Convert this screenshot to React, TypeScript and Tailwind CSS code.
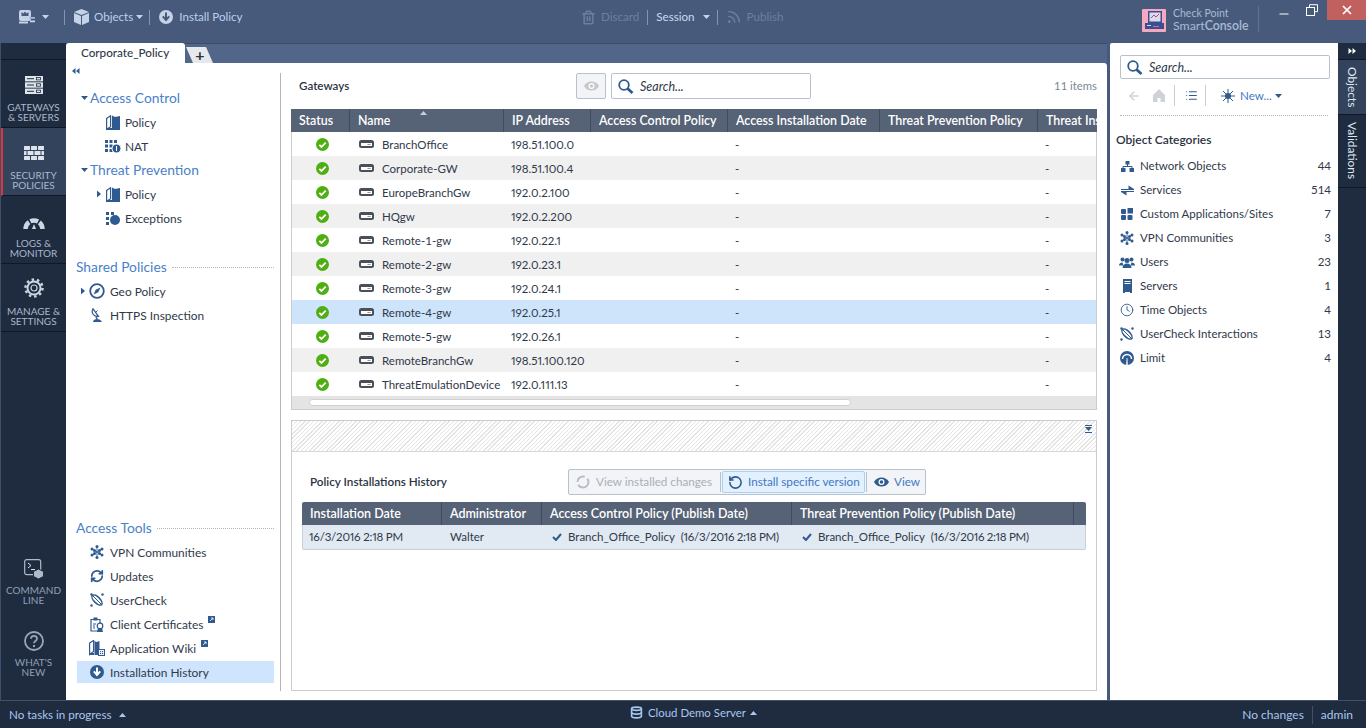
import { ArrowLeft, Clock, Database, List, Minus, RefreshCw, RotateCcw, Rss, Trash2, X } from 'lucide-react'
import type { ReactNode } from 'react'

const BLUE = '#2f5a8f'

const GATEWAYS = [
  ['BranchOffice', '198.51.100.0'],
  ['Corporate-GW', '198.51.100.4'],
  ['EuropeBranchGw', '192.0.2.100'],
  ['HQgw', '192.0.2.200'],
  ['Remote-1-gw', '192.0.22.1'],
  ['Remote-2-gw', '192.0.23.1'],
  ['Remote-3-gw', '192.0.24.1'],
  ['Remote-4-gw', '192.0.25.1'],
  ['Remote-5-gw', '192.0.26.1'],
  ['RemoteBranchGw', '198.51.100.120'],
  ['ThreatEmulationDevice', '192.0.111.13'],
]

function Caret({ className = '' }: { className?: string }) {
  return (
    <svg width="7" height="4" viewBox="0 0 7 4" className={`shrink-0 ${className}`}>
      <path d="M0 0h7L3.500 4z" fill="currentColor" />
    </svg>
  )
}

function CaretUp({ className = '' }: { className?: string }) {
  return (
    <svg width="7" height="4" viewBox="0 0 7 4" className={`shrink-0 ${className}`}>
      <path d="M0 4h7L3.500 0z" fill="currentColor" />
    </svg>
  )
}

function CaretRight() {
  return (
    <svg width="4" height="7" viewBox="0 0 4 7" className="block text-[#2f5a8f]">
      <path d="M0 0v7l4-3.500z" fill="currentColor" />
    </svg>
  )
}

function DoubleTriangle({ className = '' }: { className?: string }) {
  return (
    <svg width="8" height="6" viewBox="0 0 8 6" className={`shrink-0 ${className}`}>
      <path d="M3.500 0v6L0 3zM7.500 0v6L4 3z" fill="currentColor" />
    </svg>
  )
}

function SearchIcon() {
  return (
    <svg width="16" height="15" viewBox="0 0 16 15" className="shrink-0">
      <circle cx="6" cy="6" r="4.800" fill="none" stroke={BLUE} strokeWidth="1.800" />
      <path d="M9.500 9.500l5 4.500" stroke={BLUE} strokeWidth="2.800" />
    </svg>
  )
}

function EyeIcon({ color }: { color: string }) {
  return (
    <svg width="15" height="10" viewBox="0 0 15 10" className="shrink-0">
      <path d="M0 5C3-1 12-1 15 5 12 11 3 11 0 5z" fill={color} />
      <circle cx="7.500" cy="5" r="3" fill="#fff" />
      <circle cx="7.500" cy="5" r="1.800" fill={color} />
    </svg>
  )
}

function StatusOk() {
  return (
    <svg width="13" height="13" viewBox="0 0 13 13">
      <circle cx="6.500" cy="6.500" r="6.500" fill="#4fae12" />
      <path d="M3.300 6.800l2.200 2.200 4.200-4.300" stroke="#fff" strokeWidth="1.800" fill="none" />
    </svg>
  )
}

function GatewayIcon() {
  return (
    <svg width="15" height="8" viewBox="0 0 15 8" className="shrink-0">
      <rect x="0" y="0" width="15" height="8" rx="2.500" fill="#4a4f58" />
      <rect x="2" y="3" width="11" height="3" fill="#fff" />
      <path d="M8.500 5l1-1 1 1 1-1" stroke="#4a4f58" strokeWidth="0.700" fill="none" />
    </svg>
  )
}

function BookIcon() {
  return (
    <svg width="14" height="15" viewBox="0 0 14 15" className="shrink-0">
      <path d="M0.600 3.500l4-2.800v11l-4 2.500z" fill="none" stroke={BLUE} strokeWidth="1.200" />
      <path d="M0 13h6v2H0z" fill={BLUE} />
      <path d="M6 0.500l3 1.500 5-1V15H6z" fill={BLUE} />
    </svg>
  )
}

function NatIcon() {
  return (
    <svg width="16" height="13" viewBox="0 0 16 13" className="shrink-0">
      {[0, 4.500, 9].map((y) =>
        [0, 4.500, 9].map((x) => <rect key={`${x}-${y}`} x={x} y={y} width="3" height="3" fill={BLUE} />)
      )}
      <circle cx="11.500" cy="8.500" r="4.500" fill={BLUE} stroke="#fff" />
      <path d="M11.500 6v5" stroke="#fff" />
    </svg>
  )
}

function ExceptionsIcon() {
  return (
    <svg width="14" height="13" viewBox="0 0 14 13" className="shrink-0">
      <rect x="0" y="0" width="3" height="3" fill={BLUE} />
      <rect x="5" y="0" width="3" height="3" fill={BLUE} />
      <rect x="0" y="5" width="3" height="3" fill={BLUE} />
      <rect x="0" y="10" width="3" height="3" fill={BLUE} />
      <circle cx="9" cy="8" r="5" fill={BLUE} />
    </svg>
  )
}

function GeoIcon() {
  return (
    <svg width="16" height="16" viewBox="0 0 16 16" className="shrink-0">
      <circle cx="8" cy="8" r="6.800" fill="none" stroke={BLUE} strokeWidth="1.800" />
      <path d="M11.500 4.500L9.300 9.300 4.500 11.500l2.200-4.800z" fill={BLUE} />
    </svg>
  )
}

function HttpsIcon() {
  return (
    <svg width="12" height="14" viewBox="0 0 12 14" className="shrink-0">
      <path d="M2 0.800C0 4 2 9 7.500 8.300z" fill="#fff" stroke={BLUE} strokeWidth="1.200" />
      <path d="M4.500 4.500l2-2" stroke={BLUE} />
      <path d="M5 8.500l1 2.500" stroke={BLUE} strokeWidth="1.500" />
      <path d="M2 14c0-2 2-3 4-3s4 1 5 3z" fill={BLUE} />
    </svg>
  )
}

function VpnIcon() {
  return (
    <svg width="14" height="14" viewBox="0 0 14 14" className="shrink-0">
      <path d="M7 1.500v11M2 4l10 6M12 4L2 10" stroke={BLUE} strokeWidth="0.900" />
      {[
        [7, 1.500], [7, 12.500], [2, 4], [12, 4], [2, 10], [12, 10], [4.500, 5.500], [9.500, 5.500], [4.500, 8.500], [9.500, 8.500],
      ].map(([x, y]) => (
        <circle key={`${x}-${y}`} cx={x} cy={y} r="1.500" fill={BLUE} />
      ))}
    </svg>
  )
}

function UserCheckIcon() {
  return (
    <svg width="14" height="14" viewBox="0 0 14 14" className="shrink-0">
      <ellipse cx="7" cy="7" rx="6.500" ry="3" transform="rotate(45 7 7)" fill="none" stroke={BLUE} strokeWidth="1.500" />
      <path d="M3 3l8 8" stroke={BLUE} strokeWidth="1" />
      <circle cx="1.500" cy="1.500" r="1.200" fill={BLUE} />
      <circle cx="12.500" cy="1.500" r="1.200" fill={BLUE} />
      <circle cx="1.500" cy="12.500" r="1.200" fill={BLUE} />
    </svg>
  )
}

function CertIcon() {
  return (
    <svg width="15" height="15" viewBox="0 0 15 15" className="shrink-0">
      <path d="M1 2.500h9V14H1z" fill="none" stroke={BLUE} strokeWidth="1.200" />
      <rect x="3.500" y="0.500" width="4" height="3" fill={BLUE} />
      <circle cx="10" cy="9" r="2.800" fill="#fff" stroke={BLUE} strokeWidth="1.200" />
      <path d="M8 11l-1 4h6l-1-4z" fill={BLUE} />
      <path d="M3 7h3M3 9h2M3 11h2" stroke={BLUE} />
    </svg>
  )
}

function WikiIcon() {
  return (
    <svg width="16" height="16" viewBox="0 0 16 16" className="shrink-0">
      <path d="M0.600 3l4-2.500v11l-4 3z" fill="none" stroke={BLUE} strokeWidth="1.200" />
      <path d="M0 13h5v2H0zM5.500 1l2 1 3-1v8H9v6H5.500z" fill={BLUE} />
      <rect x="9.500" y="9.500" width="6" height="6" fill="#fff" stroke={BLUE} />
      <rect x="11" y="11" width="1.200" height="1.200" fill={BLUE} />
      <rect x="13" y="11" width="1.200" height="1.200" fill={BLUE} />
      <rect x="11" y="13" width="1.200" height="1.200" fill={BLUE} />
      <rect x="13" y="13" width="1.200" height="1.200" fill={BLUE} />
    </svg>
  )
}

function DownloadCircle({ color = BLUE, arrow = '#fff' }: { color?: string; arrow?: string }) {
  return (
    <svg width="14" height="14" viewBox="0 0 14 14" className="shrink-0">
      <circle cx="7" cy="7" r="7" fill={color} />
      <path d="M7 2.500v7M3.800 6.300L7 10l3.200-3.700" stroke={arrow} strokeWidth="2" fill="none" />
    </svg>
  )
}

function ExternalBadge() {
  return (
    <svg width="7" height="7" viewBox="0 0 7 7" className="mb-[10px] ml-[5px] shrink-0">
      <rect width="7" height="7" fill={BLUE} />
      <path d="M2 5l3-3M3 2h2v2" stroke="#fff" strokeWidth="0.800" fill="none" />
    </svg>
  )
}

function NetworkIcon() {
  return (
    <svg width="13" height="11" viewBox="0 0 13 11" className="shrink-0">
      <rect x="4.500" y="0" width="4" height="3.500" fill={BLUE} />
      <path d="M6.500 3v2.500M2 8V5.500h9V8" stroke={BLUE} fill="none" />
      <rect x="0" y="7" width="4.500" height="4" fill={BLUE} />
      <rect x="8.500" y="7" width="4.500" height="4" fill={BLUE} />
    </svg>
  )
}

function ServicesIcon() {
  return (
    <svg width="13" height="11" viewBox="0 0 13 11" className="shrink-0">
      <path d="M0 4h7.500V0.500L13 4v1H0zM0 6h13v1H5.500v3.500L0 7z" fill={BLUE} />
    </svg>
  )
}

function AppsIcon() {
  return (
    <svg width="12" height="12" viewBox="0 0 12 12" className="shrink-0">
      <rect x="0" y="1" width="5" height="5" rx="1" fill={BLUE} />
      <rect x="6.500" y="0" width="5.500" height="5.500" fill={BLUE} />
      <rect x="0" y="7" width="5" height="5" rx="1" fill={BLUE} />
      <rect x="6.500" y="7" width="5" height="5" rx="1" fill={BLUE} />
    </svg>
  )
}

function UsersIcon() {
  return (
    <svg width="16" height="11" viewBox="0 0 16 11" className="shrink-0">
      <circle cx="3.500" cy="2.500" r="2" fill={BLUE} />
      <circle cx="12.500" cy="2.500" r="2" fill={BLUE} />
      <path d="M0 8.500c0-2 1.500-3 3.500-3l1 3zM16 8.500c0-2-1.500-3-3.500-3l-1 3z" fill={BLUE} />
      <circle cx="8" cy="3.500" r="2.500" fill={BLUE} />
      <path d="M3.500 11c0-3 2-4.500 4.500-4.500s4.500 1.500 4.500 4.500z" fill={BLUE} />
    </svg>
  )
}

function ServerIcon() {
  return (
    <svg width="9" height="14" viewBox="0 0 9 14" className="shrink-0">
      <rect width="9" height="13" fill={BLUE} />
      <rect x="1.500" y="2" width="6" height="1" fill="#fff" />
      <rect x="1.500" y="4" width="6" height="1" fill="#fff" />
      <rect x="0" y="13" width="2" height="1" fill={BLUE} />
      <rect x="7" y="13" width="2" height="1" fill={BLUE} />
    </svg>
  )
}

function LimitIcon() {
  return (
    <svg width="14" height="14" viewBox="0 0 14 14" className="shrink-0">
      <circle cx="7" cy="7" r="7" fill={BLUE} />
      <path d="M2.500 8a4.500 4.500 0 0 1 9 0" stroke="#fff" strokeWidth="1.500" fill="none" />
      <path d="M6.200 14l.4-7h.8l.4 7z" fill="#fff" />
    </svg>
  )
}

function ServersNavIcon() {
  return (
    <svg width="18" height="18" viewBox="0 0 18 18">
      {[0, 6.300, 12.600].map((y) => (
        <g key={y}>
          <rect x="0" y={y} width="18" height="5.400" fill="#dfe4ec" />
          <rect x="2" y={y + 2.200} width="7" height="1" fill="#1f2b3e" />
          <rect x="11.500" y={y + 1.500} width="4" height="2.400" fill="none" stroke="#1f2b3e" strokeWidth="0.800" />
        </g>
      ))}
    </svg>
  )
}

function FirewallIcon() {
  return (
    <svg width="20" height="14" viewBox="0 0 20 14">
      {[0, 10].map((y) =>
        [0, 7, 14].map((x) => <rect key={`${x}-${y}`} x={x} y={y} width="6" height="4" rx="0.500" fill="#dfe4ec" />)
      )}
      {[0, 3.500, 10.500, 17.500].map((x, i) => (
        <rect key={x} x={x} y="5" width={i === 0 ? 2.500 : i === 3 ? 2.500 : 6} height="4" rx="0.500" fill="#dfe4ec" />
      ))}
    </svg>
  )
}

function GaugeIcon() {
  return (
    <svg width="22" height="13" viewBox="0 0 22 13">
      <path d="M2.500 13A8.500 8.500 0 0 1 19.500 13" stroke="#cdd6e3" strokeWidth="4.500" fill="none" strokeDasharray="8 1.500" />
      <path d="M11 8l-2 5h4z" fill="#cdd6e3" />
    </svg>
  )
}

function GearIcon() {
  return (
    <svg width="20" height="20" viewBox="0 0 20 20">
      <circle cx="10" cy="10" r="6.500" fill="none" stroke="#cdd6e3" strokeWidth="2" />
      <circle cx="10" cy="10" r="3" fill="none" stroke="#cdd6e3" strokeWidth="1.200" />
      <circle cx="10" cy="10" r="8.500" fill="none" stroke="#cdd6e3" strokeWidth="2.500" strokeDasharray="2.500 2.840" />
    </svg>
  )
}

function CommandIcon() {
  return (
    <svg width="20" height="20" viewBox="0 0 20 20">
      <rect x="0.700" y="0.700" width="16" height="15" rx="2" fill="none" stroke="#aeb9c9" strokeWidth="1.200" />
      <path d="M4 4l3 2.500L4 9M7 10.500h4" stroke="#dfe4ec" fill="none" />
      <path d="M14.500 10l5 2.500v5L14.500 20l-5-2.500v-5z" fill="#aeb9c9" stroke="#1f2b3e" />
    </svg>
  )
}

function HelpIcon() {
  return (
    <svg width="20" height="20" viewBox="0 0 20 20">
      <circle cx="10" cy="10" r="9" fill="none" stroke="#9aa6b8" strokeWidth="1.800" />
      <path d="M7 7.800c0-4 6-4 6 0 0 2.200-3 2.200-3 4.400" stroke="#9aa6b8" strokeWidth="1.800" fill="none" />
      <rect x="9" y="14" width="2" height="2" fill="#9aa6b8" />
    </svg>
  )
}

function CubeIcon() {
  return (
    <svg width="15" height="16" viewBox="0 0 15 16" className="shrink-0">
      <path d="M7.500 0L15 3 7.500 6 0 3z" fill="#c4d3e8" />
      <path d="M0 4l7 3v9l-7-3zM8 7l7-3v9l-7 3z" fill="#c4d3e8" />
    </svg>
  )
}

function ProfileIcon() {
  return (
    <svg width="16" height="14" viewBox="0 0 16 14" className="shrink-0">
      <rect x="0" y="0" width="12" height="11" rx="2" fill="#c4d3e8" />
      <path d="M2.500 2l2 1.500L6 1.500l1.500 2L9.500 2v4h-7z" fill="#475a7c" />
      <rect x="0" y="11.500" width="9" height="2" fill="#c4d3e8" />
      <rect x="11" y="7" width="5" height="1.800" fill="#c4d3e8" stroke="#475a7c" strokeWidth="0.300" />
      <rect x="11" y="10.500" width="5" height="1.800" fill="#c4d3e8" />
    </svg>
  )
}

function BurstIcon() {
  return (
    <svg width="14" height="14" viewBox="0 0 14 14" className="shrink-0">
      <path d="M7 0v14M0 7h14M2 2l10 10M12 2L2 12" stroke={BLUE} />
      <circle cx="7" cy="7" r="3" fill={BLUE} />
    </svg>
  )
}

function HomeIcon() {
  return (
    <svg width="12" height="13" viewBox="0 0 12 13" className="ml-[12px] shrink-0">
      <path d="M6 0l6 6v7H7.500V9h-3v4H0V6z" fill="#cfd2d6" />
    </svg>
  )
}

function Logo() {
  return (
    <svg width="24" height="23" viewBox="0 0 24 23" className="shrink-0">
      <rect width="24" height="23" rx="1" fill="#f4a9c0" />
      <rect x="6" y="2" width="14" height="12" fill="#3a4f8f" />
      <rect x="7.500" y="3.500" width="11" height="9" fill="#d8dcf0" />
      <rect x="3" y="14" width="19" height="6" fill="#3a4f8f" />
      <rect x="5" y="16" width="4" height="1" fill="#d8dcf0" />
      <rect x="11" y="17" width="6" height="1" fill="#e26a8f" />
      <path d="M9 9l3-3 2 2 3-3" stroke="#e23b6a" fill="none" />
    </svg>
  )
}

function ToolDivider({ className = '' }: { className?: string }) {
  return <div className={`h-[15px] w-px shrink-0 bg-[#8495b0] ${className}`} />
}

function RailItem({
  icon,
  lines,
  active,
  iconTop,
}: {
  icon: ReactNode
  lines: string[]
  active?: boolean
  iconTop: string
}) {
  return (
    <div
      className={`h-[68px] shrink-0 border-b border-[#0f1826] ${
        active ? 'border-l-2 border-l-[#d9363e] bg-[#34435c] pr-[2px]' : ''
      }`}
    >
      <div className={`flex h-[42px] justify-center ${iconTop}`}>{icon}</div>
      <div className="text-center text-[10px] leading-[10px] text-[#a9b8cd]">
        {lines.map((line) => (
          <div key={line}>{line}</div>
        ))}
      </div>
    </div>
  )
}

function TreeRow({
  icon,
  label,
  indent,
  caret,
  badge,
  gap = 'ml-[5px]',
}: {
  icon: ReactNode
  label: string
  indent: string
  caret?: boolean
  badge?: boolean
  gap?: string
}) {
  return (
    <div className={`flex h-[24px] items-center text-[11.900px] text-[#30394a] ${indent}`}>
      <div className="relative flex w-[16px] shrink-0 items-center justify-center">
        {caret && (
          <div className="absolute left-[-8px] top-1/2 -translate-y-1/2">
            <CaretRight />
          </div>
        )}
        {icon}
      </div>
      <span className={`pt-[2px] ${gap}`}>{label}</span>
      {badge && <ExternalBadge />}
    </div>
  )
}

function SectionTitle({ label, open, dotted }: { label: string; open?: boolean; dotted?: boolean }) {
  return (
    <div className="flex h-[24px] items-center text-[13.800px] text-[#4a7fc9]">
      {open && <Caret className="ml-[5px] mr-[2px] text-[#2f5a8f]" />}
      <span>{label}</span>
      {dotted && <div className="ml-[5px] h-0 flex-1 border-t border-dotted border-[#b5b5b5]" />}
    </div>
  )
}

function TopBar() {
  return (
    <div className="flex h-[43px] shrink-0 bg-[#475a7c] text-[11.600px] text-[#bcd0ec]">
      <div className="flex h-[34px] w-[581px] shrink-0 items-center pl-[19px]">
        <ProfileIcon />
        <Caret className="ml-[7px] text-[#c4d3e8]" />
        <ToolDivider className="ml-[15px]" />
        <div className="ml-[9px]">
          <CubeIcon />
        </div>
        <span className="ml-[5px]">Objects</span>
        <Caret className="ml-[3px] text-[#c4d3e8]" />
        <ToolDivider className="ml-[6px]" />
        <div className="ml-[9px]">
          <DownloadCircle color="#c4d3e8" arrow="#475a7c" />
        </div>
        <span className="ml-[6px]">Install Policy</span>
      </div>
      <div className="flex h-[34px] w-[561px] shrink-0 items-center">
        <Trash2 size={15} strokeWidth={2.500} className="text-[#6d7f9d]" />
        <span className="ml-[5px] text-[#6d7f9d]">Discard</span>
        <ToolDivider className="ml-[8px]" />
        <span className="ml-[8px] text-[#cbdaf0]">Session</span>
        <Caret className="ml-[8px] text-[#c4d3e8]" />
        <ToolDivider className="ml-[7px]" />
        <Rss size={16} strokeWidth={2} className="ml-[8px] text-[#6d7f9d]" />
        <span className="ml-[5px] text-[#6d7f9d]">Publish</span>
      </div>
      <div className="flex h-[32px] w-[116px] shrink-0 items-end">
        <Logo />
        <div className="ml-[7px] flex flex-col text-[#a9bad3]">
          <span className="text-[10.500px] leading-[11px]">Check Point</span>
          <span className="text-[12.300px] leading-[13px]">
            Smart<span className="font-semibold">Console</span>
          </span>
        </div>
      </div>
      <div className="mt-[6px] h-[26px] w-px shrink-0 bg-[#5f7192]" />
      <div className="ml-[18px] flex h-[20px] items-start">
        <Minus size={14} strokeWidth={2} className="mt-[7px] text-white" />
        <svg width="12" height="12" viewBox="0 0 12 12" className="ml-[15px] mt-[4px] shrink-0">
          <path d="M3.500 3V.7h8v7H9" fill="none" stroke="#fff" />
          <rect x="0.500" y="3.500" width="8" height="8" fill="none" stroke="#fff" />
        </svg>
        <div className="ml-[9px] flex h-[20px] w-[39px] items-center justify-center bg-[#c0605f]">
          <X size={14} strokeWidth={3} className="text-white" />
        </div>
      </div>
    </div>
  )
}

function LeftRail() {
  return (
    <div className="flex w-[66px] shrink-0 flex-col border-l border-[#3d4f6b] bg-[#1f2b3e]">
      <div className="h-[17px] shrink-0 border-b border-[#0f1826]" />
      <RailItem icon={<ServersNavIcon />} lines={['GATEWAYS', '& SERVERS']} iconTop="pt-[16px]" />
      <RailItem icon={<FirewallIcon />} lines={['SECURITY', 'POLICIES']} active iconTop="pt-[18px]" />
      <RailItem icon={<GaugeIcon />} lines={['LOGS &', 'MONITOR']} iconTop="pt-[20px]" />
      <RailItem icon={<GearIcon />} lines={['MANAGE &', 'SETTINGS']} iconTop="pt-[14px]" />
      <div className="mt-[227px] flex flex-col items-center text-center text-[10px] leading-[10px] text-[#8fa0b8]">
        <CommandIcon />
        <div className="mt-[6px]">COMMAND</div>
        <div>LINE</div>
        <div className="mt-[26px]">
          <HelpIcon />
        </div>
        <div className="mt-[6px]">WHAT&apos;S</div>
        <div>NEW</div>
      </div>
    </div>
  )
}

function NavPane() {
  return (
    <div className="flex w-[215px] shrink-0 flex-col justify-between border-r border-[#b5b5b5] pl-[10px] pr-[6px]">
      <div>
        <div className="relative h-[13px]">
          <DoubleTriangle className="absolute left-[-4px] top-[-5px] text-[#2f5a8f]" />
        </div>
        <SectionTitle label="Access Control" open />
        <TreeRow icon={<BookIcon />} label="Policy" indent="pl-[29px]" gap="ml-[4px]" />
        <TreeRow icon={<NatIcon />} label="NAT" indent="pl-[29px]" gap="ml-[4px]" />
        <SectionTitle label="Threat Prevention" open />
        <TreeRow icon={<BookIcon />} label="Policy" indent="pl-[29px]" gap="ml-[4px]" caret />
        <TreeRow icon={<ExceptionsIcon />} label="Exceptions" indent="pl-[29px]" gap="ml-[4px]" />
        <div className="mt-[25px]">
          <SectionTitle label="Shared Policies" dotted />
        </div>
        <TreeRow icon={<GeoIcon />} label="Geo Policy" indent="pl-[13px]" caret />
        <TreeRow icon={<HttpsIcon />} label="HTTPS Inspection" indent="pl-[13px]" />
      </div>
      <div className="pb-[8px]">
        <SectionTitle label="Access Tools" dotted />
        <TreeRow icon={<VpnIcon />} label="VPN Communities" indent="pl-[13px]" />
        <TreeRow icon={<RefreshCw size={14} strokeWidth={3} color={BLUE} />} label="Updates" indent="pl-[13px]" />
        <TreeRow icon={<UserCheckIcon />} label="UserCheck" indent="pl-[13px]" />
        <TreeRow icon={<CertIcon />} label="Client Certificates" indent="pl-[13px]" badge />
        <TreeRow icon={<WikiIcon />} label="Application Wiki" indent="pl-[13px]" badge />
        <div className="ml-px mt-px h-[22px] bg-[#cfe5fd] [&>div]:h-[22px]">
          <TreeRow icon={<DownloadCircle />} label="Installation History" indent="pl-[12px]" />
        </div>
      </div>
    </div>
  )
}

function GatewaysTable() {
  const head = 'flex items-center border-r border-[#3f4b5f] pl-[8px] pt-[2px] truncate'
  return (
    <div className="border-x border-b border-[#cccccc]">
      <div className="-mx-px grid h-[23px] grid-cols-[59px_154px_87px_137px_152px_158px_59px] overflow-hidden bg-[#566276] text-[12.400px] font-semibold text-white">
        <div className={head}>Status</div>
        <div className={`relative ${head}`}>
          Name
          <CaretUp className="absolute left-[70px] top-[2px] text-[#c9ced6]" />
        </div>
        <div className={head}>IP Address</div>
        <div className={head}>Access Control Policy</div>
        <div className={head}>Access Installation Date</div>
        <div className={head}>Threat Prevention Policy</div>
        <div className="flex items-center overflow-hidden whitespace-nowrap pl-[8px] pt-[2px]">Threat Installation</div>
      </div>
      {GATEWAYS.map(([name, ip], i) => (
        <div
          key={name}
          className={`grid h-[24px] grid-cols-[58px_154px_87px_137px_152px_158px_58px] items-center text-[11.500px] text-[#30394a] ${
            i === 7 ? 'bg-[#cde4fb]' : i % 2 === 1 ? 'bg-[#f0f0f0]' : 'bg-white'
          }`}
        >
          <div className="flex justify-center pl-[2px]">
            <StatusOk />
          </div>
          <div className="flex items-center pl-[9px]">
            <GatewayIcon />
            <span className="ml-[8px] whitespace-nowrap pt-[2px]">{name}</span>
          </div>
          <div className="whitespace-nowrap pl-[7px] pt-[2px] proportional-nums">{ip}</div>
          <div />
          <div className="pl-[7px] pt-[2px]">-</div>
          <div />
          <div className="pl-[7px] pt-[2px]">-</div>
        </div>
      ))}
      <div className="flex h-[13px] items-center bg-[#e4e4e4] pl-[17px]">
        <div className="h-[7px] w-[542px] rounded-full border border-[#d0d0d0] bg-white" />
      </div>
    </div>
  )
}

function PolicyCell() {
  return (
    <div className="flex items-center whitespace-nowrap pl-[9px] proportional-nums">
      <svg width="10" height="8" viewBox="0 0 10 8" className="shrink-0">
        <path d="M1 4l3 3 5-6" stroke={BLUE} strokeWidth="2" fill="none" />
      </svg>
      <span className="ml-[6px]">Branch_Office_Policy</span>
      <span className="ml-[6px] tracking-[-0.3px]">(16/3/2016 2:18 PM)</span>
    </div>
  )
}

function HistoryPanel() {
  const head = 'flex items-center border-r border-[#3f4b5f] pl-[8px] pt-[2px] whitespace-nowrap'
  return (
    <div className="mt-[10px] flex-1 border border-[#cccccc]">
      <div className="flex h-[31px] items-start justify-end border-b border-[#d8d8d8] bg-[repeating-linear-gradient(135deg,#e4e4e4_0,#e4e4e4_1px,#ffffff_1px,#ffffff_3px)] pr-[4px] pt-[4px]">
        <svg width="7" height="8" viewBox="0 0 7 8">
          <path d="M0 0h7v1H0zM0 2h7L3.500 6zM0 7h7v1H0z" fill={BLUE} />
        </svg>
      </div>
      <div className="mt-[17px] flex h-[26px] items-center">
        <div className="w-[276px] pl-[18px] text-[11.700px] font-semibold text-[#2a3342]">
          Policy Installations History
        </div>
        <div className="flex h-[26px] items-center whitespace-nowrap rounded-[2px] border border-[#b8c2cf] bg-[#f2f4f7] text-[11.700px]">
          <div className="flex w-[151px] items-center pl-[7px] text-[#aab0b8]">
            <svg width="14" height="14" viewBox="0 0 14 14" className="shrink-0">
              <circle cx="7" cy="7" r="5.500" fill="none" stroke="#b9bdc3" strokeWidth="2" strokeDasharray="14 3 10 3" />
            </svg>
            <span className="ml-[6px]">View installed changes</span>
          </div>
          <div className="h-[20px] w-px bg-[#b8c2cf]" />
          <div className="ml-[1px] flex h-[22px] w-[143px] items-center rounded-[2px] border border-[#a9d0f5] bg-[#e3f0fd] pl-[5px] text-[#3f78c6]">
            <RotateCcw size={15} strokeWidth={2.500} color={BLUE} />
            <span className="ml-[5px]">Install specific version</span>
          </div>
          <div className="ml-[1px] h-[20px] w-px bg-[#b8c2cf]" />
          <div className="flex w-[58px] items-center pl-[7px] text-[#3f78c6]">
            <EyeIcon color={BLUE} />
            <span className="ml-[5px]">View</span>
          </div>
        </div>
      </div>
      <div className="mx-[10px] mt-[7px]">
        <div className="grid h-[23px] grid-cols-[140px_100px_250px_282px_12px] rounded-t-[2px] bg-[#566276] text-[12.500px] font-semibold text-white">
          <div className={head}>Installation Date</div>
          <div className={head}>Administrator</div>
          <div className={head}>Access Control Policy (Publish Date)</div>
          <div className={head}>Threat Prevention Policy (Publish Date)</div>
          <div />
        </div>
        <div className="grid h-[25px] grid-cols-[140px_100px_250px_282px] items-center rounded-b-[2px] border border-t-0 border-[#c8ced6] bg-[#e1e9f3] text-[11.500px] text-[#30394a]">
          <div className="pl-[6px] tracking-[-0.2px] proportional-nums">16/3/2016 2:18 PM</div>
          <div className="pl-[7px]">Walter</div>
          <PolicyCell />
          <PolicyCell />
        </div>
      </div>
    </div>
  )
}

function GatewaysPane() {
  return (
    <div className="flex min-w-0 flex-1 flex-col px-[10px]">
      <div className="mb-[10px] flex h-[26px] shrink-0 items-center">
        <div className="w-[285px] pl-[8px] text-[11.600px] font-semibold text-[#2a3342]">Gateways</div>
        <div className="flex h-[26px] w-[30px] items-center justify-center rounded-[2px] border border-[#b8c2cf] bg-[#f2f4f7]">
          <EyeIcon color="#c5c8cc" />
        </div>
        <div className="ml-[5px] flex h-[26px] w-[200px] items-center rounded-[2px] border border-[#b8c2cf] bg-white pl-[6px]">
          <SearchIcon />
          <span className="ml-[6px] pt-[2px] text-[12.500px] italic text-[#30394a]">Search...</span>
        </div>
        <div className="flex-1 text-right text-[11.300px] text-[#7b8794]">11 items</div>
      </div>
      <GatewaysTable />
      <HistoryPanel />
    </div>
  )
}

const CATEGORIES: [ReactNode, string, number][] = [
  [<NetworkIcon />, 'Network Objects', 44],
  [<ServicesIcon />, 'Services', 514],
  [<AppsIcon />, 'Custom Applications/Sites', 7],
  [<VpnIcon />, 'VPN Communities', 3],
  [<UsersIcon />, 'Users', 23],
  [<ServerIcon />, 'Servers', 1],
  [<Clock size={14} color={BLUE} strokeWidth={1.500} />, 'Time Objects', 4],
  [<UserCheckIcon />, 'UserCheck Interactions', 13],
  [<LimitIcon />, 'Limit', 4],
]

function ObjectsPanel() {
  return (
    <div className="w-[228px] shrink-0 rounded-tl-[2px] bg-white">
      <div className="ml-[10px] mr-[8px] mt-[12px] flex h-[24px] items-center rounded-[2px] border border-[#b8c2cf] pl-[6px]">
        <SearchIcon />
        <span className="ml-[6px] pt-[2px] text-[12.500px] italic text-[#30394a]">Search...</span>
      </div>
      <div className="mx-[10px] mt-[5px] flex h-[23px] items-center">
        <ArrowLeft size={14} strokeWidth={2.500} className="ml-[7px] shrink-0 text-[#cfd2d6]" />
        <HomeIcon />
        <div className="ml-[9px] h-[21px] w-px bg-[#c9ced6]" />
        <List size={13} strokeWidth={2} color={BLUE} className="ml-[10px] shrink-0" />
        <div className="ml-[7px] h-[21px] w-px bg-[#c9ced6]" />
        <div className="ml-[15px]">
          <BurstIcon />
        </div>
        <span className="ml-[5px] text-[11.600px] text-[#3f78c6]">New...</span>
        <Caret className="ml-[3px] text-[#2f5a8f]" />
      </div>
      <div className="mx-[10px] mt-[8px] border-t border-dotted border-[#b5b5b5]" />
      <div className="ml-[6px] mt-[12px] h-[24px] text-[12px] font-semibold leading-[24px] text-[#2a3342]">
        Object Categories
      </div>
      <div className="mt-[2px] pl-[6px] pr-[7px]">
        {CATEGORIES.map(([icon, label, count]) => (
          <div key={label} className="flex h-[24px] items-center text-[11.500px] text-[#30394a]">
            <div className="w-[24px] shrink-0">
              <div className="flex w-[22px] justify-center">{icon}</div>
            </div>
            <span className="flex-1">{label}</span>
            <span>{count}</span>
          </div>
        ))}
      </div>
    </div>
  )
}

function RightRail() {
  return (
    <div className="flex w-[28px] shrink-0 flex-col bg-[#1f2b3e] text-[11.900px] text-[#dfe6f1]">
      <div className="flex h-[17px] items-center justify-center border-b border-[#0f1826]">
        <DoubleTriangle className="rotate-180 text-white" />
      </div>
      <div className="flex h-[55px] items-center justify-center border-b border-[#0f1826] bg-[#34435c]">
        <span className="[writing-mode:vertical-rl]">Objects</span>
      </div>
      <div className="flex h-[73px] items-center justify-center border-b border-[#0f1826]">
        <span className="[writing-mode:vertical-rl]">Validations</span>
      </div>
    </div>
  )
}

function StatusBar() {
  return (
    <div className="flex h-[28px] shrink-0 items-center border-t border-[#40506b] bg-[#1f2b3e] pl-[9px] text-[11.600px] text-[#a9c7f0]">
      <span className="w-[103px] shrink-0">No tasks in progress</span>
      <CaretUp className="ml-[7px]" />
      <div className="mb-[3px] ml-[504px] flex items-center text-[11.400px]">
        <Database size={13} strokeWidth={3} />
        <span className="ml-[5px]">Cloud Demo Server</span>
        <CaretUp className="ml-[4px]" />
      </div>
      <div className="ml-auto flex items-center pr-[13px] text-[12px]">
        <span>No changes</span>
        <div className="mx-[8px] h-[18px] w-px bg-[#40506b]" />
        <span>admin</span>
      </div>
    </div>
  )
}

export default function App() {
  return (
    <div className="flex h-[728px] w-[1366px] flex-col overflow-hidden whitespace-nowrap bg-[#475a7c] font-['Lato',sans-serif]">
      <TopBar />
      <div className="flex min-h-0 flex-1">
        <LeftRail />
        <div className="flex w-[1041px] shrink-0 flex-col">
          <div className="flex h-[20px] shrink-0 items-end border-t border-[#3c4d6c] bg-[#52668a]">
            <div className="-mt-px flex h-[20px] w-[119px] items-center rounded-t-[3px] bg-white pl-[15px] text-[11.700px] font-medium text-[#30394a]">
              Corporate_Policy
            </div>
            <div className="ml-px flex h-[16px] w-[27px] items-center justify-center bg-[#e6e8ec] pl-px text-[16px] font-bold leading-none text-[#2a3342] [clip-path:polygon(0_0,20px_0,27px_100%,7px_100%)]">
              +
            </div>
          </div>
          <div className="flex min-h-0 flex-1 rounded-tr-[3px] bg-white pb-[9px] pt-[10px]">
            <NavPane />
            <GatewaysPane />
          </div>
        </div>
        <div className="w-[3px] shrink-0" />
        <ObjectsPanel />
        <RightRail />
      </div>
      <StatusBar />
    </div>
  )
}
